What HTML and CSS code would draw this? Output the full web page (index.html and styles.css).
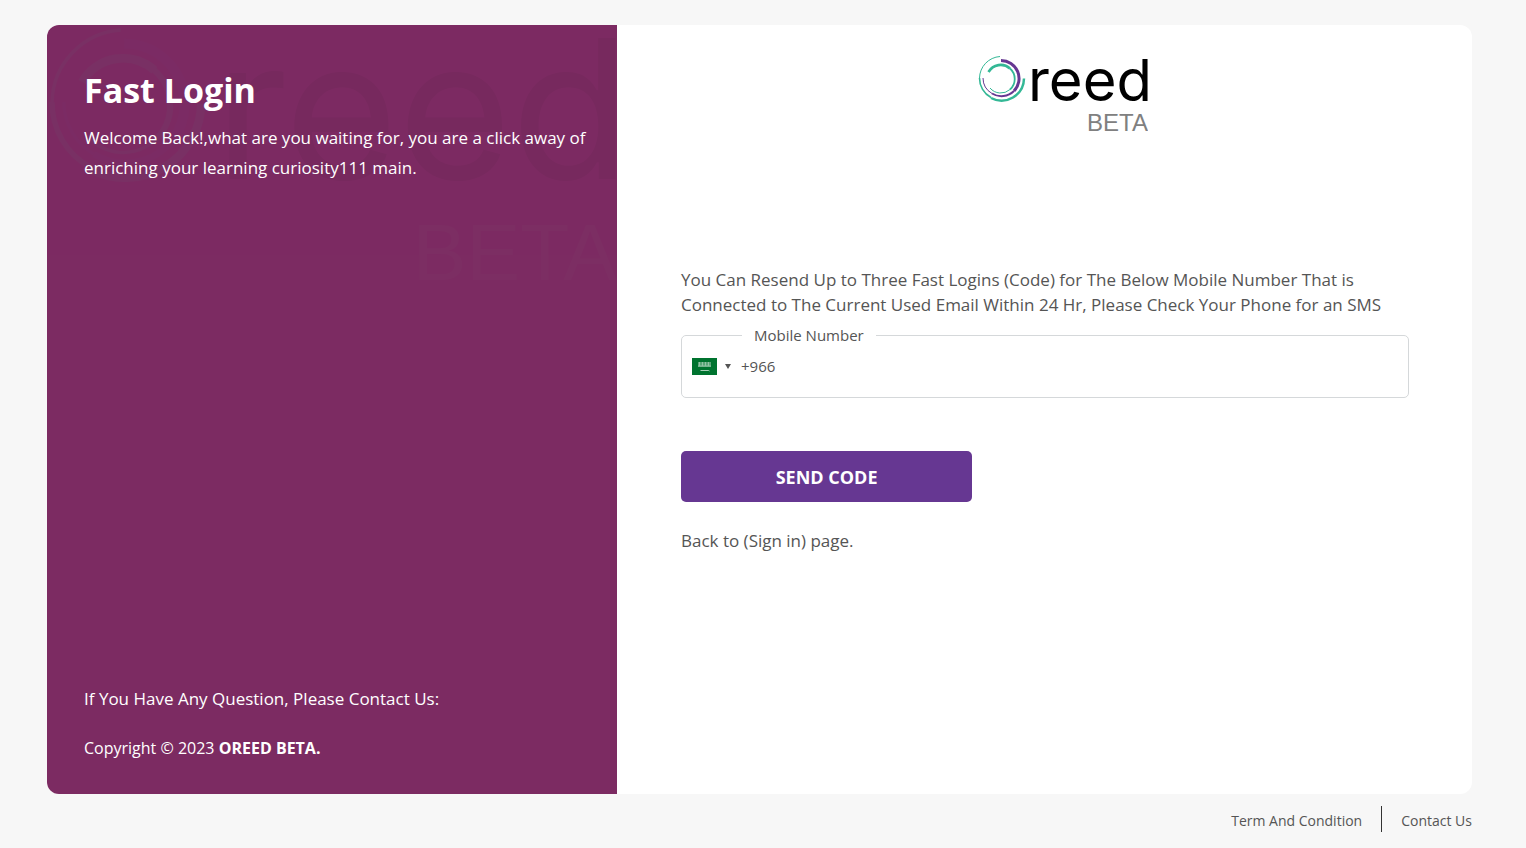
FILE: index.html
```html
<!DOCTYPE html>
<html lang="en">
<head>
    <meta charset="UTF-8">
    <meta name="viewport" content="width=device-width, initial-scale=1.0">
    <title>Fast Login - Oreed</title>
    <link rel="stylesheet" href="styles.css">
</head>
<body>
    <main class="login-card">
        <section class="side-panel">
            <!-- faded logo behind the welcome text -->
            <svg class="watermark" viewBox="0 0 170 78" aria-hidden="true">
                <use href="#oreed-logo"></use>
            </svg>
            <div class="welcome">
                <h1>Fast Login</h1>
                <p>Welcome Back!,what are you waiting for, you are a click away of enriching your learning curiosity111 main.</p>
            </div>
            <div class="side-footer">
                <p class="question">If You Have Any Question, Please Contact Us:</p>
                <p class="copyright">Copyright © 2023 <strong>OREED BETA.</strong></p>
            </div>
        </section>

        <section class="form-panel">
            <div class="brand">
                <svg class="logo" viewBox="0 0 170 78" role="img" aria-label="Oreed Beta">
                    <defs>
                        <g id="oreed-logo">
                            <!-- outer green ring, thicker towards the bottom right -->
                            <path d="M22 1.5 A22 22 0 0 0 1.5 23" fill="none" stroke="#34b896" stroke-width="1"/>
                            <path d="M1.5 23 A22 22 0 0 0 13 42.500" fill="none" stroke="#34b896" stroke-width="1.600"/>
                            <path d="M13 43 A22.500 22.500 0 0 0 46 23.500" fill="none" stroke="#34b896" stroke-width="2.500"/>
                            <!-- purple ring -->
                            <path d="M23 5.500 A18 18 0 0 1 36 36" fill="none" stroke="#663792" stroke-width="3"/>
                            <path d="M36 36 A18 18 0 0 1 14 38.500" fill="none" stroke="#663792" stroke-width="2"/>
                            <path d="M14 38.500 A18 18 0 0 1 5 23" fill="none" stroke="#663792" stroke-width="1"/>
                            <!-- inner green ring -->
                            <path d="M10.500 17 A14 14 0 0 1 32 13.500" fill="none" stroke="#34b896" stroke-width="2.600"/>
                            <path d="M32 13.500 A14 14 0 0 1 32 34.500" fill="none" stroke="#34b896" stroke-width="1.800"/>
                            <path d="M32 34.500 A14 14 0 0 1 12 33" fill="none" stroke="#34b896" stroke-width="1"/>
                            <text class="logo-name" x="174" y="46" text-anchor="end">reed</text>
                            <text class="logo-beta" x="170" y="76" text-anchor="end">BETA</text>
                        </g>
                    </defs>
                    <use href="#oreed-logo"></use>
                </svg>
            </div>

            <form class="login-form">
                <p class="hint">You Can Resend Up to Three Fast Logins (Code) for The Below Mobile Number That is Connected to The Current Used Email Within 24 Hr, Please Check Your Phone for an SMS</p>
                <fieldset class="phone-field">
                    <legend><label for="mobile">Mobile Number</label></legend>
                    <div class="phone-row">
                        <button type="button" class="country" aria-label="Country: Saudi Arabia">
                            <svg class="flag" viewBox="0 0 25 17">
                                <rect width="25" height="17" fill="#00732f"/>
                                <rect x="6" y="4" width="13" height="5" fill="#fff" opacity="0.350"/>
                                <path d="M7.500 4v4M10.500 4v4M13.500 4v4M16.500 4v4M6 8h13" stroke="#fff" stroke-width="1" opacity="0.350"/>
                                <path d="M8.500 12.500h8l1 .5" fill="none" stroke="#fff" stroke-width="1" opacity="0.650"/>
                            </svg>
                            <svg class="arrow" viewBox="0 0 6 5"><path d="M0 0h6L3 5z" fill="#555"/></svg>
                        </button>
                        <input type="tel" id="mobile" value="+966">
                    </div>
                </fieldset>
                <button type="submit" class="send-btn">SEND CODE</button>
                <a href="#" class="back-link">Back to (Sign in) page.</a>
            </form>
        </section>
    </main>

    <footer class="page-footer">
        <a href="#">Term And Condition</a>
        <a href="#">Contact Us</a>
    </footer>
</body>
</html>
```
FILE: styles.css
```css
* {
    box-sizing: border-box;
}
body {
    margin: 0;
    padding: 25px 54px 0 47px;
    min-height: 100vh;
    display: flex;
    flex-direction: column;
    background-color: #f7f7f7;
    color: #555;
    font-family: "Open Sans", "Noto Sans", sans-serif;
    font-size: 17px;
}
h1, p {
    margin: 0;
}
a {
    color: inherit;
    text-decoration: none;
}
.login-card {
    flex: 1;
    display: flex;
    background-color: #fff;
    border-radius: 12px;
    overflow: hidden;
}

/* left side */
.side-panel {
    position: relative;
    width: 40%;
    padding: 40px 24px 32px 37px;
    display: flex;
    flex-direction: column;
    justify-content: space-between;
    background-color: #7c2b62;
    color: #fff;
}
.watermark {
    position: absolute;
    top: 0;
    left: 0;
    width: 100%;
    opacity: 0.04;
}
.welcome, .side-footer {
    position: relative;
}
.welcome h1 {
    font-size: 34px;
    line-height: 50px;
    margin-bottom: 8px;
}
.welcome p {
    line-height: 30px;
}
.question {
    line-height: 30px;
    margin-bottom: 20px;
}
.copyright {
    font-size: 16px;
    line-height: 28px;
}

/* right side */
.form-panel {
    flex: 1;
    padding: 30px 63px 30px 64px;
}
.brand {
    padding-left: 36px;
    text-align: center;
}
.logo {
    display: block;
    width: 170px;
    margin: 0 auto;
}
.logo-name {
    font-family: Inter, sans-serif;
    font-size: 58px;
}
.logo-beta {
    font-family: "Liberation Sans", Arial, sans-serif;
    font-size: 24px;
    fill: #808080;
}
.login-form {
    margin-top: 134px;
}
.hint {
    line-height: 25px;
}
.phone-field {
    margin: 8px 0 0;
    padding: 5px 10px 15px;
    border: 1px solid #d5d8da;
    border-radius: 5px;
}
.phone-field legend {
    margin-left: 50px;
    padding: 0 12px;
    font-size: 15px;
    line-height: 20px;
}
.phone-row {
    display: flex;
    align-items: center;
    gap: 10px;
}
.country {
    display: flex;
    align-items: center;
    gap: 8px;
    padding: 0;
    border: none;
    background: none;
    cursor: pointer;
}
.flag {
    width: 25px;
    height: 17px;
}
.arrow {
    width: 6px;
    height: 5px;
}
.phone-row input {
    flex: 1;
    height: 32px;
    padding: 0;
    border: none;
    outline: none;
    color: #555;
    font-family: inherit;
    font-size: 15px;
}
.send-btn {
    display: block;
    width: 40%;
    height: 51px;
    margin: 53px 0 24px;
    border: none;
    border-radius: 5px;
    background-color: #663792;
    color: #fff;
    font-family: inherit;
    font-size: 18px;
    font-weight: bold;
    cursor: pointer;
}
.back-link {
    line-height: 30px;
}

.page-footer {
    display: flex;
    justify-content: flex-end;
    padding: 12px 0 16px;
    font-size: 14px;
    line-height: 22px;
}
.page-footer a {
    padding-top: 4px;
}
.page-footer a + a {
    margin-left: 19px;
    padding-left: 19px;
    border-left: 1px solid #333;
}
```
